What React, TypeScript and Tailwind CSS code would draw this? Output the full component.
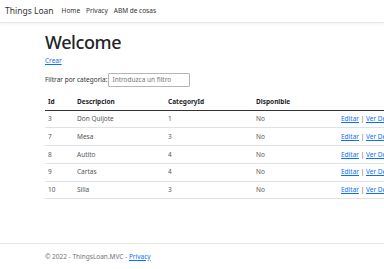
import React from "react";

const rows = [
  { id: 3, d: "Don Quijote", c: 1 },
  { id: 7, d: "Mesa", c: 3 },
  { id: 8, d: "Autito", c: 4 },
  { id: 9, d: "Cartas", c: 4 },
  { id: 10, d: "Silla", c: 3 },
];

export default function App() {
  return (
    <div
      className="w-[384px] h-[269px] overflow-hidden bg-white text-[#212529] flex flex-col"
      style={{ fontFamily: '"Noto Sans", "Open Sans", sans-serif' }}
    >
      <nav className="h-[23px] shrink-0 flex items-center pl-[5px] border-b border-[#e5e5e5] shadow-[0_1px_3px_rgba(0,0,0,0.06)]">
        <span className="text-[8.5px] leading-none text-[#333] mr-[8px]">Things Loan</span>
        <div className="flex gap-[6px] text-[6.5px] leading-none text-[#333]">
          <span>Home</span>
          <span>Privacy</span>
          <span>ABM de cosas</span>
        </div>
      </nav>
      <main className="pl-[45px] pt-[7px] flex-1">
        <h1 className="text-[18px] leading-[24px] font-medium tracking-[-0.4px]">Welcome</h1>
        <a className="block mt-[2px] text-[6.5px] leading-[10px] text-[#0d6efd] underline">Crear</a>
        <div className="flex items-center mt-[7px] text-[6.5px] text-[#333]">
          <span className="mr-[1px]">Filtrar por categoria:</span>
          <div className="w-[82px] h-[14px] border border-[#b5b5b5] rounded-[1px] px-[3px] flex items-center text-[#757575]">
            Introduzca un filtro
          </div>
        </div>
        <table className="mt-[7px] w-[420px] text-[6.5px] border-collapse table-fixed">
          <colgroup>
            <col className="w-[29px]" />
            <col className="w-[91px]" />
            <col className="w-[88px]" />
            <col className="w-[85px]" />
            <col />
          </colgroup>
          <thead>
            <tr className="h-[16px] border-b border-[#333]">
              <th className="text-left pl-[3px] font-bold">Id</th>
              <th className="text-left pl-[3px] font-bold">Descripcion</th>
              <th className="text-left pl-[3px] font-bold">CategoryId</th>
              <th className="text-left pl-[3px] font-bold">Disponible</th>
              <th></th>
            </tr>
          </thead>
          <tbody>
            {rows.map((r) => (
              <tr key={r.id} className="h-[17.75px] border-b border-[#dee2e6] text-[#555]">
                <td className="pl-[3px]">{r.id}</td>
                <td className="pl-[3px]">{r.d}</td>
                <td className="pl-[3px]">{r.c}</td>
                <td className="pl-[3px]">No</td>
                <td className="pl-[3px] whitespace-nowrap">
                  <a className="text-[#0d6efd] underline">Editar</a> |{" "}
                  <a className="text-[#0d6efd] underline">Ver Detalles</a>
                </td>
              </tr>
            ))}
          </tbody>
        </table>
      </main>
      <footer className="h-[26px] shrink-0 border-t border-[#e5e5e5] pl-[45px] flex items-center text-[6.5px] text-[#6c757d]">
        <span>
          © 2022 - ThingsLoan.MVC - <a className="text-[#0d6efd] underline">Privacy</a>
        </span>
      </footer>
    </div>
  );
}
